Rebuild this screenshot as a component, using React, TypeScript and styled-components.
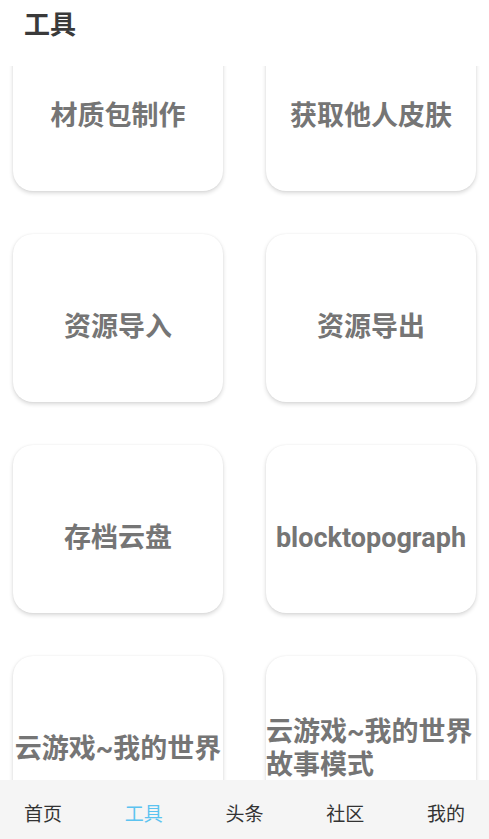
import React, { useEffect, useRef } from "react";
import styled, { createGlobalStyle } from "styled-components";

const GlobalStyle = createGlobalStyle`
  html, body {
    margin: 0;
    padding: 0;
    background: #ffffff;
    font-family: Roboto, "Noto Sans CJK SC", sans-serif;
  }
  * { box-sizing: border-box; }
`;

const Page = styled.div`
  display: flex;
  flex-direction: column;
  width: 489px;
  height: 839px;
  overflow: hidden;
  background: #ffffff;
`;

const Header = styled.header`
  height: 66px;
  flex: none;
  padding: 8px 0 0 24px;
  font-size: 26px;
  font-weight: 700;
  line-height: 34px;
  color: #3a3a3a;
  background: #ffffff;
  position: relative;
  z-index: 1;
`;

const ScrollArea = styled.div`
  flex: 1;
  overflow: hidden;
`;

const Grid = styled.div`
  display: grid;
  grid-template-columns: 210px 210px;
  column-gap: 43px;
  row-gap: 43px;
  padding: 22px 13px 40px;
`;

const Card = styled.div`
  height: 168px;
  border-radius: 20px;
  background: #ffffff;
  box-shadow: 0 2px 4px rgba(0, 0, 0, 0.16), 0 0 2px rgba(0, 0, 0, 0.06);
  display: flex;
  align-items: center;
  justify-content: center;
  padding-top: 18px;
`;

const CardLabel = styled.span`
  font-size: 27px;
  font-weight: 700;
  line-height: 33px;
  color: #757575;
  text-align: left;
  word-break: break-all;
`;

const BottomNav = styled.nav`
  height: 59px;
  flex: none;
  background: #f5f5f5;
  display: flex;
  align-items: center;
  justify-content: space-between;
  padding: 7px 24px 0;
`;

const NavItem = styled.span<{ $active?: boolean }>`
  font-size: 19px;
  line-height: 24px;
  color: ${(p) => (p.$active ? "#5cc3f0" : "#333333")};
  font-family: "Noto Sans CJK SC", sans-serif;
`;

const tools = [
  "材质包制作",
  "获取他人皮肤",
  "资源导入",
  "资源导出",
  "存档云盘",
  "blocktopograph",
  "云游戏~我的世界",
  "云游戏~我的世界故事模式",
];

const navItems = ["首页", "工具", "头条", "社区", "我的"];

export default function App() {
  const scrollRef = useRef<HTMLDivElement>(null);
  useEffect(() => {
    if (scrollRef.current) scrollRef.current.scrollTop = 65;
  }, []);
  return (
    <>
      <GlobalStyle />
      <Page>
        <Header>工具</Header>
        <ScrollArea ref={scrollRef}>
          <Grid>
            {tools.map((t) => (
              <Card key={t}>
                <CardLabel>{t}</CardLabel>
              </Card>
            ))}
          </Grid>
        </ScrollArea>
        <BottomNav>
          {navItems.map((n) => (
            <NavItem key={n} $active={n === "工具"}>
              {n}
            </NavItem>
          ))}
        </BottomNav>
      </Page>
    </>
  );
}
